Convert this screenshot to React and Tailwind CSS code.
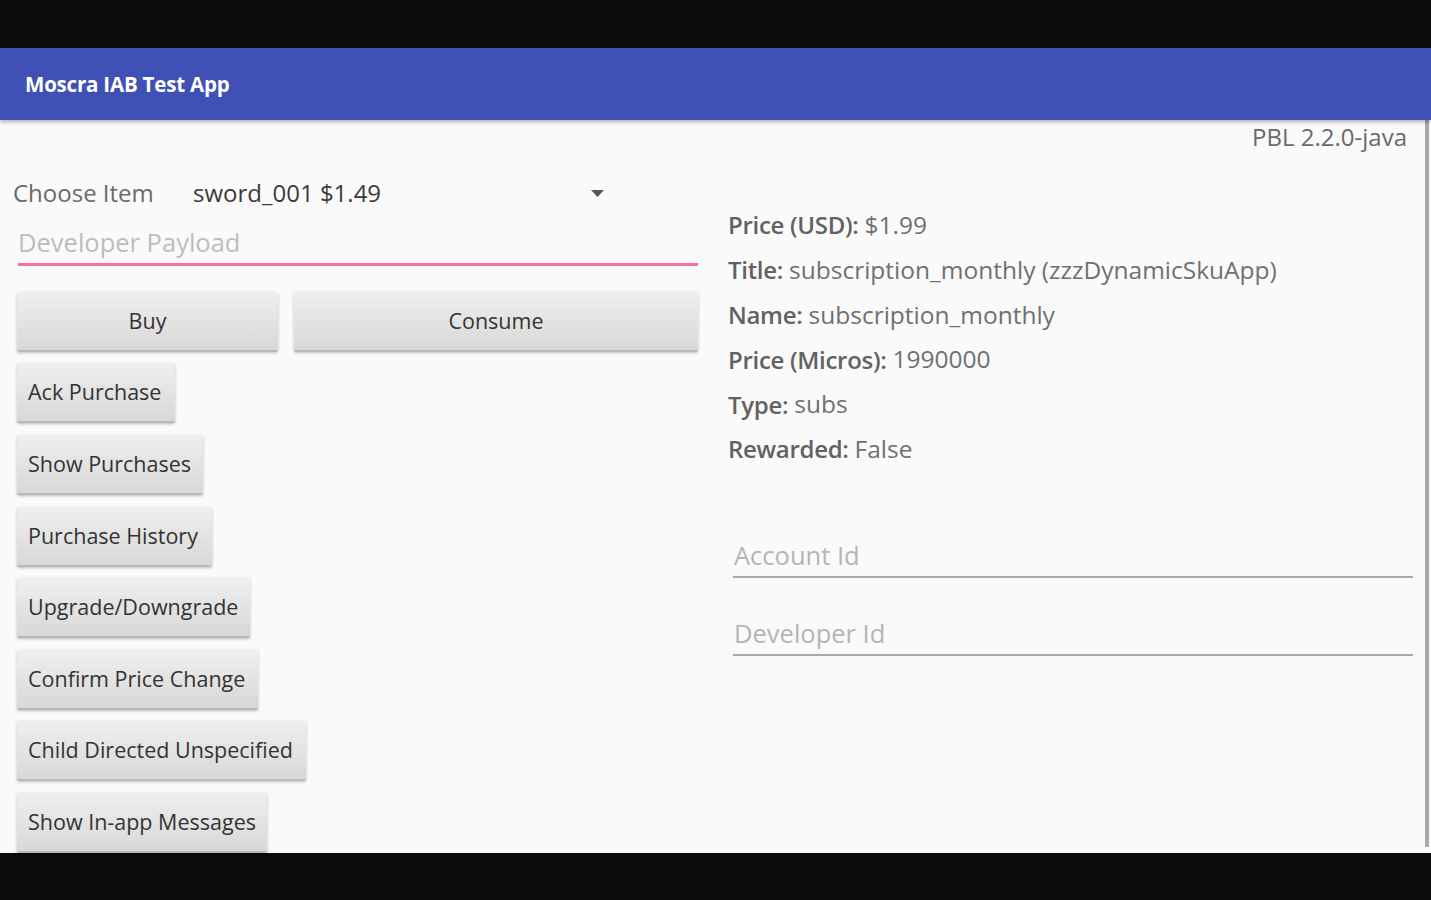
const font = { fontFamily: '"Open Sans", "Noto Sans", sans-serif' }

const buttons = [
  { label: 'Ack Purchase', w: 'w-[158px]' },
  { label: 'Show Purchases', w: 'w-[186px]' },
  { label: 'Purchase History', w: 'w-[195px]' },
  { label: 'Upgrade/Downgrade', w: 'w-[233px]' },
  { label: 'Confirm Price Change', w: 'w-[241px]' },
  { label: 'Child Directed Unspecified', w: 'w-[289px]' },
  { label: 'Show In-app Messages', w: 'w-[250px]' },
]

const details = [
  ['Price (USD):', '$1.99'],
  ['Title:', 'subscription_monthly (zzzDynamicSkuApp)'],
  ['Name:', 'subscription_monthly'],
  ['Price (Micros):', '1990000'],
  ['Type:', 'subs'],
  ['Rewarded:', 'False'],
]

function GrayButton({ children, className = '', center }) {
  return (
    <button
      type="button"
      className={`h-[60px] shrink-0 rounded-[2px] bg-gradient-to-b from-[#efefef] to-[#d8d8d8] border-b-2 border-[#b9b9b9] shadow-[0_1px_3px_rgba(0,0,0,0.25)] text-[21.5px] text-[#333] ${center ? 'text-center' : 'text-left pl-[11px]'} ${className}`}
    >
      {children}
    </button>
  )
}

export default function App() {
  return (
    <div className="w-[1431px] h-[900px] flex flex-col bg-[#0c0c0c] overflow-hidden" style={font}>
      <div className="h-[48px] shrink-0" />
      <header className="h-[72px] shrink-0 bg-[#3f51b5] flex items-center pl-[25px] shadow-[0_2px_4px_rgba(0,0,0,0.3)] z-10">
        <h1 className="text-white text-[20.5px] font-bold tracking-[-0.2px]">Moscra IAB Test App</h1>
      </header>
      <main className="h-[733px] shrink-0 bg-[#fafafa] flex">
        {/* left column */}
        <section className="w-[712px] shrink-0 flex flex-col">
          <div className="mt-[53px] h-[40px] flex items-center">
            <span className="pl-[13px] w-[193px] text-[24px] text-[#6a6a6a]">Choose Item</span>
            <span className="text-[24px] text-[#3a3a3a]">sword_001 $1.49</span>
            <svg className="ml-[210px] mt-[1px]" width="13" height="7" viewBox="0 0 13 7">
              <path d="M0 0 L13 0 L6.5 7 Z" fill="#555" />
            </svg>
          </div>
          <div className="mt-[12px] ml-[18px] w-[680px] h-[41px] border-b-[3px] border-[#f5719a] flex items-center">
            <span className="text-[25.5px] text-[#bdbdbd] -mt-[4px]">Developer Payload</span>
          </div>
          <div className="mt-[26px] ml-[17px] flex flex-col gap-[11.6px]">
            <div className="flex gap-[16px]">
              <GrayButton center className="w-[261px]">Buy</GrayButton>
              <GrayButton center className="w-[404px]">Consume</GrayButton>
            </div>
            {buttons.map((b) => (
              <GrayButton key={b.label} className={b.w}>{b.label}</GrayButton>
            ))}
          </div>
        </section>

        {/* right column */}
        <section className="flex-1 flex flex-col pl-[16px] pr-[18px]">
          <div className="text-right text-[24px] text-[#6a6a6a] h-[34px] leading-[34px]">PBL 2.2.0-java</div>
          <div className="mt-[49px] flex flex-col">
            {details.map(([k, v]) => (
              <div key={k} className="h-[44.8px] flex items-center text-[24px]">
                <span className="font-semibold tracking-[-0.3px] text-[#626262]">{k}</span>
                <span className="ml-[6px] text-[24.5px] text-[#707070]">{v}</span>
              </div>
            ))}
          </div>
          <div className="mt-[66px] ml-[5px] mr-[-6px] h-[40px] border-b-2 border-[#a8a8a8] flex items-center">
            <span className="text-[25.5px] text-[#b5b5b5] pl-[1px] -mt-[4px]">Account Id</span>
          </div>
          <div className="mt-[38px] ml-[5px] mr-[-6px] h-[40px] border-b-2 border-[#a8a8a8] flex items-center">
            <span className="text-[25.5px] text-[#b5b5b5] pl-[1px] -mt-[4px]">Developer Id</span>
          </div>
        </section>

        {/* scroll indicator */}
        <div className="w-[4px] mr-[2px] mb-[6px] bg-[#a9a9a9] shrink-0" />
      </main>
      <div className="flex-1" />
    </div>
  )
}
